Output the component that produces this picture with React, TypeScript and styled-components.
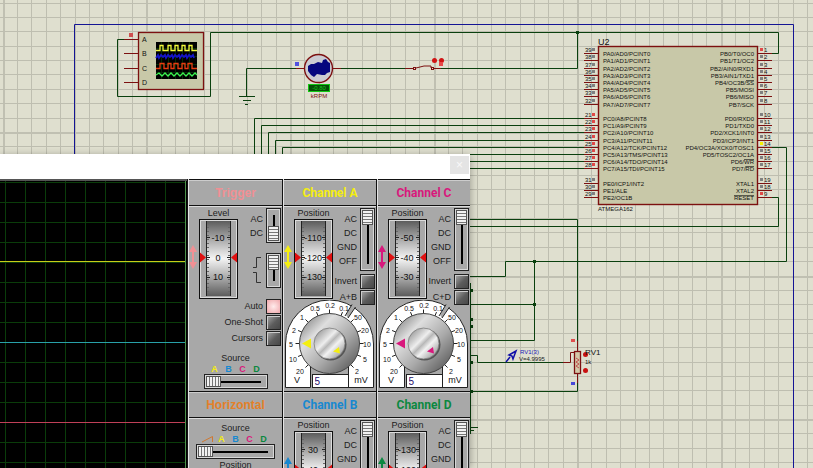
import React from "react";
import styled, { createGlobalStyle } from "styled-components";

const GlobalStyle = createGlobalStyle`
  * { box-sizing: border-box; }
  body { margin: 0; overflow: hidden; font-family: "Liberation Sans", Arial, sans-serif; }
`;

const WIRE = "#0a400e";
const PIN = "#7c1010";

/* ---------- schematic ---------- */

const Desktop = styled.main`
  position: relative;
  min-height: 100vh;
  overflow: hidden;
  background: #dfdfcf;
`;

const Sheet = styled.svg`
  display: block;
  width: 100%;
  height: 100vh;
  font-family: "Liberation Sans", Arial, sans-serif;
`;

const GRID_STEP = 14.36;

function gridOffsets(major: number, limit: number) {
  const out: { at: number; strong: boolean }[] = [];
  const before = Math.floor(major / GRID_STEP);
  for (let i = -before; major + i * GRID_STEP < limit; i++) {
    out.push({ at: Math.round(major + i * GRID_STEP), strong: i % 10 === 0 });
  }
  return out;
}

function Grid() {
  return (
    <g shapeRendering="crispEdges">
      {gridOffsets(433.5, 2600).map((l) => (
        <rect key={"v" + l.at} x={l.at} y={0} width={l.strong ? 2 : 1} height="100%" fill={l.strong ? "#c0c0b2" : "#bebeb0"} />
      ))}
      {gridOffsets(275.5, 1600).map((l) => (
        <rect key={"h" + l.at} x={0} y={l.at} height={l.strong ? 2 : 1} width="100%" fill={l.strong ? "#c0c0b2" : "#bebeb0"} />
      ))}
    </g>
  );
}

type Pin = { y: number; n: string; label: string; over?: string; mark?: string };
const GREY = "#808080";
const RED = "#e04848";

const leftPins: Pin[] = [
  ...[53, 60, 68, 75, 82, 89, 96, 104].map((y, i) => ({ y, n: String(39 - i), label: `PA${i}/AD${i}/PCINT${i}`, mark: GREY })),
  ...["PC0/A8/PCINT8", "PC1/A9/PCINT9", "PC2/A10/PCINT10", "PC3/A11/PCINT11", "PC4/A12/TCK/PCINT12", "PC5/A13/TMS/PCINT13", "PC6/A14/TDO/PCINT14", "PC7/A15/TDI/PCINT15"].map(
    (label, i) => ({ y: [118, 125, 132, 140, 147, 154, 161, 168][i], n: String(21 + i), label, mark: RED })
  ),
  { y: 183, n: "31", label: "PE0/ICP1/INT2", mark: GREY },
  { y: 190, n: "30", label: "PE1/ALE", mark: GREY },
  { y: 197, n: "29", label: "PE2/OC1B", mark: GREY },
];

const rightPins: Pin[] = [
  { y: 53, n: "1", label: "PB0/T0/OC0", mark: RED },
  { y: 60, n: "2", label: "PB1/T1/OC2" },
  { y: 68, n: "3", label: "PB2/AIN0/RXD1" },
  { y: 75, n: "4", label: "PB3/AIN1/TXD1" },
  { y: 82, n: "5", label: "PB4/OC3B/", over: "SS" },
  { y: 89, n: "6", label: "PB5/MOSI" },
  { y: 96, n: "7", label: "PB6/MISO" },
  { y: 104, n: "8", label: "PB7/SCK" },
  { y: 118, n: "10", label: "PD0/RXD0" },
  { y: 125, n: "11", label: "PD1/TXD0" },
  { y: 132, n: "12", label: "PD2/XCK1/INT0" },
  { y: 140, n: "13", label: "PD3/ICP3/INT1" },
  { y: 147, n: "14", label: "PD4/OC3A/XCK0/TOSC1", mark: "#f6f000" },
  { y: 154, n: "15", label: "PD5/TOSC2/OC1A" },
  { y: 161, n: "16", label: "PD6/", over: "WR" },
  { y: 168, n: "17", label: "PD7/", over: "RD" },
  { y: 183, n: "19", label: "XTAL1" },
  { y: 190, n: "18", label: "XTAL2" },
  { y: 197, n: "9", label: "", over: "RESET", mark: RED },
];

function Chip() {
  return (
    <g>
      <rect x={598.5} y={46.5} width={159} height={158} fill="#c8c8a8" stroke={PIN} strokeWidth={1.4} />
      <g fontSize={6} fill="#111">
        {leftPins.map((p) => (
          <g key={p.n}>
            <path d={`M584 ${p.y + 0.5}H598`} stroke={PIN} />
            <text x={585} y={p.y - 1} fontSize={6}>{p.n}</text>
            <rect x={592} y={p.y - 5} width={3} height={3} fill={p.mark} />
            <text x={603} y={p.y + 3}>{p.label}</text>
          </g>
        ))}
        {rightPins.map((p) => (
          <g key={p.n}>
            <path d={`M758 ${p.y + 0.5}H772`} stroke={PIN} />
            <text x={764} y={p.y - 1} fontSize={6}>{p.n}</text>
            <rect x={760} y={p.y - 5} width={3} height={3} fill={p.mark ?? GREY} />
            <text x={754} y={p.y + 3} textAnchor="end">
              {p.label}
              {p.over && <tspan textDecoration="overline">{p.over}</tspan>}
            </text>
          </g>
        ))}
        <text x={598} y={211}>ATMEGA162</text>
        <text x={598} y={45} fontSize={9}>U2</text>
      </g>
    </g>
  );
}

function MiniScope() {
  return (
    <g>
      <rect x={138.5} y={32.5} width={65} height={57} fill="#c8c8a8" stroke={PIN} strokeWidth={1.3} />
      {["A", "B", "C", "D"].map((c, i) => (
        <g key={c}>
          <path d={`M124 ${[39, 53, 68, 82][i] + 0.5}H138`} stroke={PIN} />
          <text x={142} y={[42, 56, 71, 85][i]} fontSize={7} fill="#111">{c}</text>
        </g>
      ))}
      <rect x={156} y={42} width={41} height={37} fill="#000" />
      <path d="M161.5 42V79M168.5 42V79M175.5 42V79M182.5 42V79M189.5 42V79M156 48.5H197M156 56.5H197M156 64.5H197M156 72.5H197" stroke="#062c06" />
      <path d="M156 50.5H160V45.5H163V50.5H168V45.5H171V50.5H175V45.5H178V50.5H182V45.5H185V50.5H189V45.5H192V50.5H197" fill="none" stroke="#f4fa3c" strokeWidth={1.3} />
      <path d="M156 58l2-3 1 3 2-3 2 2 2-2 1 3 2-3 2 2 2-2 1 3 2-3 2 2 2-2 1 3 2-3 2 2 2-2 1 3 2-3 2 2 2-2 1 3" fill="none" stroke="#1414c8" strokeWidth={1.8} />
      <path d="M156 68.5H160V63.5H164V68.5H168V63.5H171V68.5H174V63.5H178V68.5H182V63.5H185V68.5H188V63.5H192V68.5H197" fill="none" stroke="#e83c10" strokeWidth={1.3} />
      <path d="M156 75l3-2 3 3 3-3 3 3 3-3 3 3 3-3 3 3 3-3 3 3 3-3 3 3 3-3 2 2" fill="none" stroke="#3cf450" strokeWidth={1.3} />
      <rect x={129} y={33} width={4} height={4} fill="#d05050" />
    </g>
  );
}

function Motor() {
  return (
    <g>
      <path d="M296 68.5H304M333 68.5H341" stroke={PIN} />
      <circle cx={318.5} cy={68.5} r={14} fill="#cbcbd2" stroke={PIN} strokeWidth={1.4} />
      <path d="M308 66V71L311 75L314 77L317 74L322 75L325 75L327 73L330 72V63L328 62L326 59L323 60L322 63L318 62L314 64L311 64Z" fill="#06067e" />
      <rect x={295} y={62} width={4} height={4} fill="#5252e0" />
      <rect x={308.5} y={84.5} width={21} height={7} fill="#064f06" stroke="#12c812" />
      <text x={319} y={90} fontSize={6} textAnchor="middle" fill="#18c818">-0.80</text>
      <text x={319} y={98} fontSize={6} textAnchor="middle" fill={PIN}>kRPM</text>
    </g>
  );
}

function Potentiometer() {
  return (
    <g>
      <path d="M577.5 341V351M577.5 373V383M563 362.5H570.5V352.5H574" fill="none" stroke={PIN} />
      <rect x={574.5} y={351.5} width={6} height={22} fill="#d4c8a8" stroke={PIN} strokeWidth={1.3} />
      <path d="M576 358l3 2-3 2 3 2-3 2 3 2" fill="none" stroke="#c05050" />
      <rect x={571} y={339} width={4} height={3} fill="#e05050" />
      <rect x={571} y={382} width={4} height={3} fill="#4848d8" />
      <circle cx={585.5} cy={354.5} r={2.5} fill="#c81010" />
      <circle cx={585.5} cy={370.5} r={2.5} fill="#c81010" />
      <text x={585} y={355} fontSize={8} fill="#111">RV1</text>
      <text x={585} y={364} fontSize={6} fill="#111">1k</text>
      <path d="M506 362l4-5M509 355l7-4-3 8-1-3z" fill="none" stroke="#1010a8" strokeWidth={1.5} />
      <text x={520} y={354} fontSize={6} fill="#1818b8">RV1(3)</text>
      <text x={519} y={361} fontSize={6} fill="#222">V=4.9995</text>
    </g>
  );
}

function Schematic() {
  const bus = [118, 125, 132, 140, 147, 154, 161, 168];
  const drop = [254, 261, 268, 275, 282, 289, 296, 303];
  const junctions = [[577, 32], [534, 261], [534, 304], [471, 290], [471, 319], [471, 326], [471, 362], [471, 391]];
  return (
    <Sheet role="img" aria-label="Circuit schematic">
      <Grid />
      <path d="M74.5 2000V24.5H793.5V2000" fill="none" stroke="#141494" />
      <g fill="none" stroke={WIRE}>
        <path d="M124 39.5H117.5V96.5H210.5V32.5H778.5V53.5H772" />
        <path d="M577.5 32.5V68.5H441M405 68.5H341M296 68.5H246.5V96.5M239 96.5H255M243 100.5H251M245 104.5H248" />
        {bus.map((y, i) => (
          <path key={y} d={`M584 ${y + 0.5}H${drop[i] + 0.5}V200`} />
        ))}
        <path d="M772 147.5H786.5V261.5H505.5V276.5H460" />
        <path d="M772 197.5H778.5V226.5H460M460 219.5H577.5V341" />
        <path d="M534.5 261.5V340.5H460M460 304.5H534.5" />
        <path d="M460 355.5H477.5V362.5H563M460 391.5H577.5V383M460 427.5H478M460 430.5H474M470.5 283V434" />
      </g>
      {junctions.map(([x, y]) => (
        <rect key={x + "-" + y} x={x - 1} y={y - 1} width={3} height={3} fill={WIRE} />
      ))}
      <MiniScope />
      <Motor />
      <g fill="none" stroke={PIN}>
        <path d="M405 68.5H413M434 68.5H441M416 68l8-2h7v2" />
        <rect x={413.5} y={67.5} width={2} height={2} />
        <rect x={431.5} y={67.5} width={2} height={2} />
      </g>
      <circle cx={434.5} cy={60.5} r={2.5} fill="#d01414" />
      <circle cx={441.5} cy={60.5} r={2.5} fill="#d01414" />
      <rect x={439} y={62} width={4} height={4} fill="#e84848" />
      <Chip />
      <Potentiometer />
    </Sheet>
  );
}

/* ---------- oscilloscope window ---------- */

const ScopeWindow = styled.section`
  position: absolute;
  left: 0;
  top: 154px;
  bottom: 0;
  width: 470px;
  display: flex;
  flex-direction: column;
  overflow: hidden;
  background: #a8a8a8;
`;

const WindowShadow = styled.div`
  position: absolute;
  left: 0;
  top: 156px;
  bottom: 0;
  width: 470px;
  box-shadow: 0 0 8px rgba(0, 0, 0, 0.35);
`;

const TitleBar = styled.header`
  flex: none;
  display: flex;
  justify-content: flex-end;
  height: 25px;
  padding: 2px 1px;
  background: #fff;
`;

const CloseButton = styled.button`
  width: 19px;
  height: 18px;
  padding: 0;
  border: 0;
  background: #e4e4e4;
  color: #f8f8f8;
  font: 12px/18px "Liberation Sans", sans-serif;
`;

const WindowBody = styled.div`
  flex: 1;
  min-height: 0;
  display: grid;
  grid-template-columns: 1fr 95px 94px 94px;
`;

const Screen = styled.svg`
  display: block;
  width: 100%;
  height: 100%;
  background: #000;
  border-top: 2px solid #555;
`;

const Column = styled.div`
  display: flex;
  flex-direction: column;
  border-left: 1px solid #111;
  box-shadow: inset 1px 0 #e4e4e4;
  padding-left: 1px;
`;

const PanelTitle = styled.h2<{ $color: string; $narrow?: boolean }>`
  flex: none;
  margin: 0;
  height: 27px;
  border: solid #111;
  border-width: 1px 0;
  box-shadow: inset 0 1px #ccc;
  color: ${(p) => p.$color};
  font: bold 12px/27px ${(p) => (p.$narrow ? "Roboto" : '"Liberation Sans"')}, sans-serif;
  text-align: center;
`;

const PanelBody = styled.div`
  flex: none;
  height: 185px;
  padding-top: 1px;
  box-shadow: inset 0 1px #dcdcdc;
  color: #1c1c1c;
  font-size: 9px;
  line-height: 12px;
`;

const Controls = styled.div`
  display: grid;
  grid-template-columns: 10px 39px 1fr;
  height: 98px;
  padding-right: 1px;
`;

const ArrowMark = styled.svg`
  width: 8px;
  height: 24px;
  margin-top: 38px;
  overflow: visible;
`;

const Gauge = styled.div`
  display: flex;
  flex-direction: column;
  align-items: center;
`;

const GaugeFace = styled.svg`
  display: block;
  width: 39px;
  height: 80px;
`;

const SideStack = styled.div`
  display: flex;
  flex-direction: column;
  align-items: flex-end;
  padding-top: 1px;
`;

const SwitchRow = styled.div<{ $gapAfter?: number }>`
  display: flex;
  align-items: flex-start;
  gap: 3px;
  margin-bottom: ${(p) => p.$gapAfter ?? 2}px;
`;

const SwitchLabels = styled.div`
  display: flex;
  flex-direction: column;
  padding-top: 4px;
  line-height: 14px;
  text-align: right;
`;

const SliderBase = styled.input`
  appearance: none;
  display: block;
  margin: 0;
  padding: 1px;
  border: 1px solid #222;
  outline: 1px solid #d8d8d8;
  outline-offset: -2px;
  background: #a8a8a8;
`;

const VSlider = styled(SliderBase)<{ $h: number }>`
  writing-mode: vertical-lr;
  width: 15px;
  height: ${(p) => p.$h}px;
  &::-webkit-slider-runnable-track {
    height: 100%;
    width: 11px;
    background: linear-gradient(#000, #000) 5px 5px / 2px calc(100% - 10px) no-repeat;
  }
  &::-webkit-slider-thumb {
    appearance: none;
    width: 11px;
    height: 15px;
    border: 1px solid #555;
    background: repeating-linear-gradient(#f2f2f2 0 2px, #777 2px 3px);
  }
`;

const HSlider = styled(SliderBase)<{ $w: number }>`
  width: ${(p) => p.$w}px;
  height: 15px;
  &::-webkit-slider-runnable-track {
    height: 11px;
    background: linear-gradient(#000, #000) 5px 5px / calc(100% - 10px) 2px no-repeat;
  }
  &::-webkit-slider-thumb {
    appearance: none;
    width: 15px;
    height: 11px;
    border: 1px solid #555;
    background: repeating-linear-gradient(90deg, #f2f2f2 0 2px, #777 2px 3px);
  }
`;

const ToggleLabel = styled.label`
  display: flex;
  align-items: center;
  justify-content: flex-end;
  gap: 3px;
  height: 16px;
  white-space: nowrap;
`;

const ToggleBox = styled.input`
  appearance: none;
  flex: none;
  width: 15px;
  height: 15px;
  margin: 0;
  border: 1px solid #222;
  background: linear-gradient(135deg, #aaa, #5c5c5c 55%, #484848);
  box-shadow: inset 1px 1px #ccc;
  &:checked {
    background: radial-gradient(#ffecec, #f0a8ac);
    box-shadow: none;
  }
`;

const TriggerToggles = styled.div`
  display: flex;
  flex-direction: column;
  margin-top: -7px;
  padding-right: 1px;
`;

const SourceGroup = styled.div<{ $top: number }>`
  display: flex;
  flex-direction: column;
  align-items: center;
  margin-top: ${(p) => p.$top}px;
`;

const SourceLetters = styled.div`
  display: flex;
  font-weight: bold;
  line-height: 10px;
`;

const Letter = styled.span<{ $color: string }>`
  width: 14px;
  text-align: center;
  color: ${(p) => p.$color};
`;

const RampIcon = styled.svg`
  width: 14px;
  height: 10px;
`;

const KnobArea = styled.div`
  display: grid;
  margin-top: -5px;
`;

const KnobFace = styled.svg`
  grid-area: 1 / 1;
  display: block;
  width: 90px;
  height: 88px;
  margin-left: 1px;
`;

const ValueBox = styled.input`
  grid-area: 1 / 1;
  align-self: end;
  justify-self: center;
  width: 37px;
  height: 14px;
  padding: 0 2px;
  border: 1px solid #222;
  border-radius: 0;
  background: #fff;
  color: #28106c;
  font: 10px/12px "Liberation Sans", sans-serif;
`;

const YELLOW = "#f4ee10";
const BLUE = "#1888d0";
const MAGENTA = "#d8187c";
const GREEN = "#0c8840";

function Arrow({ color }: { color: string }) {
  return (
    <ArrowMark viewBox="0 0 8 24" fill={color}>
      <path d="M4 0L8 7H5V17H8L4 24L0 17H3V7H0Z" />
    </ArrowMark>
  );
}

function Dial({ caption, values, id }: { caption: string; values: string[]; id: string }) {
  return (
    <Gauge>
      <span>{caption}</span>
      <GaugeFace viewBox="0 0 39 80" role="img" aria-label={`${caption} ${values[1]}`}>
        <defs>
          <linearGradient id={id} x1="0" y1="0" x2="0" y2="1">
            <stop offset="0" stopColor="#5c5c5c" />
            <stop offset="0.2" stopColor="#9c9c9c" />
            <stop offset="0.5" stopColor="#f4f4f4" />
            <stop offset="0.8" stopColor="#9c9c9c" />
            <stop offset="1" stopColor="#5c5c5c" />
          </linearGradient>
        </defs>
        <rect x="0.5" y="0.5" width="38" height="79" fill="#a8a8a8" stroke="#111" />
        <rect x="1.5" y="1.5" width="36" height="77" fill="none" stroke="#dcdcdc" />
        <rect x="7" y="2" width="25" height="75" fill={`url(#${id})`} />
        <path d="M7.5 2V77M31.5 2V77" stroke="#222" />
        {Array.from({ length: 18 }, (_, i) => (
          <path key={i} d={`M8 ${i * 4 + 4.5}h2M29 ${i * 4 + 4.5}h2`} stroke="#666" />
        ))}
        <path d="M8 18.5h3M28 18.5h3M8 38.5h3M28 38.5h3M8 58.5h3M28 58.5h3" stroke="#222" />
        <path d="M1 33.5L7 38.5L1 43.5ZM38 33.5L32 38.5L38 43.5Z" fill="#e01010" />
        <g fontSize="9" textAnchor="middle" fill="#111">
          {values.map((v, i) => (
            <text key={v} x="19" y={[21.5, 42, 61][i]}>{v}</text>
          ))}
        </g>
      </GaugeFace>
    </Gauge>
  );
}

const knobScale: [string, number, number][] = [
  ["0.1", 59, 8], ["0.2", 45, 5], ["0.5", 30, 8], ["1", 17, 17], ["2", 9, 30], ["5", 6, 44], ["10", 8, 59], ["20", 15, 71],
  ["50", 73, 17], ["20", 80, 30], ["10", 82, 44], ["5", 80, 59], ["2", 72, 71],
];

function Knob({ color, id }: { color: string; id: string }) {
  return (
    <KnobArea>
      <KnobFace viewBox="0 0 90 88" role="img" aria-label="Volts per division">
        <defs>
          <linearGradient id={id + "o"} x1="0" y1="0" x2="1" y2="1">
            <stop offset="0.1" stopColor="#909090" />
            <stop offset="0.3" stopColor="#dedede" />
            <stop offset="0.6" stopColor="#a8a8a8" />
            <stop offset="0.9" stopColor="#606060" />
          </linearGradient>
          <linearGradient id={id + "i"} x1="0" y1="0" x2="1" y2="1">
            <stop offset="0.1" stopColor="#999" />
            <stop offset="0.4" stopColor="#eee" />
            <stop offset="0.5" stopColor="#b8b8b8" />
            <stop offset="0.62" stopColor="#f2f2f2" />
            <stop offset="0.9" stopColor="#999" />
          </linearGradient>
        </defs>
        <path d="M0.5 87.5V44A44 44 0 0 1 88.5 44V87.5H63.5V64H25.5V87.5Z" fill="#fff" stroke="#222" />
        <path d="M70.5 7L63 18L61 15L67 4.500Z" fill="#a8a8a8" />
        <path d="M70.5 7L63 18M67 4.5L60 16" stroke="#222" />
        {Array.from({ length: 13 }, (_, i) => {
          const a = ((i * 22.5 - 135) * Math.PI) / 180;
          return <line key={i} x1={44.5 + 29 * Math.sin(a)} y1={43.5 - 29 * Math.cos(a)} x2={44.5 + 34 * Math.sin(a)} y2={43.5 - 34 * Math.cos(a)} stroke="#222" />;
        })}
        <g fontSize="7" textAnchor="middle" fill="#111">
          {knobScale.map(([t, x, y], i) => (
            <text key={i} x={x} y={y + 2.5}>{t}</text>
          ))}
        </g>
        <g fontSize="9" textAnchor="middle" fill="#111">
          <text x="12" y="83">V</text>
          <text x="76" y="83">mV</text>
        </g>
        <circle cx="44.5" cy="43.5" r="30" fill={`url(#${id}o)`} stroke="#444" />
        <circle cx="45.5" cy="44.5" r="16" fill="#555" />
        <circle cx="44.5" cy="43.5" r="15.5" fill={`url(#${id}i)`} stroke="#777" strokeWidth="0.7" />
        <path d="M17 43.5L26 38.5V48.5Z" fill={color} />
        <path d="M48 51.5L54 47L55 53.5Z" fill={color} />
      </KnobFace>
      <ValueBox aria-label="Scale value" defaultValue="5" />
    </KnobArea>
  );
}

type ChannelProps = { name: string; color: string; values: string[]; sum: string };

function Channel({ name, color, values, sum }: ChannelProps) {
  return (
    <>
      <PanelTitle $color={color} $narrow>Channel {name}</PanelTitle>
      <PanelBody>
        <Controls>
          <Arrow color={color} />
          <Dial caption="Position" values={values} id={"dial" + name} />
          <SideStack>
            <SwitchRow>
              <SwitchLabels>
                <span>AC</span>
                <span>DC</span>
                <span>GND</span>
                <span>OFF</span>
              </SwitchLabels>
              <VSlider type="range" $h={63} min={0} max={3} defaultValue={0} aria-label={`Channel ${name} coupling`} />
            </SwitchRow>
            <ToggleLabel>Invert<ToggleBox type="checkbox" /></ToggleLabel>
            <ToggleLabel>{sum}<ToggleBox type="checkbox" /></ToggleLabel>
          </SideStack>
        </Controls>
        <Knob color={color} id={"knob" + name} />
      </PanelBody>
    </>
  );
}

function Letters() {
  return (
    <>
      <Letter $color={YELLOW}>A</Letter>
      <Letter $color={BLUE}>B</Letter>
      <Letter $color={MAGENTA}>C</Letter>
      <Letter $color={GREEN}>D</Letter>
    </>
  );
}

function Trigger() {
  return (
    <>
      <PanelTitle $color="#f09094">Trigger</PanelTitle>
      <PanelBody>
        <Controls>
          <Arrow color="#f09094" />
          <Dial caption="Level" values={["-10", "0", "10"]} id="dialTrigger" />
          <SideStack>
            <SwitchRow $gapAfter={10}>
              <SwitchLabels><span>AC</span><span>DC</span></SwitchLabels>
              <VSlider type="range" $h={35} min={0} max={1} defaultValue={1} aria-label="Trigger coupling" />
            </SwitchRow>
            <SwitchRow>
              <svg width="10" height="34" fill="none" stroke="#333">
                <path d="M0 14.5H3.5V4.5H8M0 19.5H3.5V29.5H8" />
              </svg>
              <VSlider type="range" $h={35} min={0} max={1} defaultValue={0} aria-label="Trigger edge" />
            </SwitchRow>
          </SideStack>
        </Controls>
        <TriggerToggles>
          <ToggleLabel>Auto<ToggleBox type="checkbox" defaultChecked /></ToggleLabel>
          <ToggleLabel>One-Shot<ToggleBox type="checkbox" /></ToggleLabel>
          <ToggleLabel>Cursors<ToggleBox type="checkbox" /></ToggleLabel>
        </TriggerToggles>
        <SourceGroup $top={6}>
          <span>Source</span>
          <SourceLetters><Letters /></SourceLetters>
          <HSlider type="range" $w={64} min={0} max={3} defaultValue={0} aria-label="Trigger source" />
        </SourceGroup>
      </PanelBody>
    </>
  );
}

function Horizontal() {
  return (
    <>
      <PanelTitle $color="#e48028">Horizontal</PanelTitle>
      <PanelBody>
        <SourceGroup $top={3}>
          <span>Source</span>
          <SourceLetters>
            <RampIcon viewBox="0 0 14 10" fill="none" stroke="#d07830">
              <path d="M1 8L11.5 2.5V8" />
            </RampIcon>
            <Letters />
          </SourceLetters>
          <HSlider type="range" $w={79} min={0} max={4} defaultValue={0} aria-label="Horizontal source" />
          <span>Position</span>
        </SourceGroup>
      </PanelBody>
    </>
  );
}

function Display() {
  return (
    <Screen role="img" aria-label="Traces">
      <g stroke="#0a3c0a" shapeRendering="crispEdges">
        {Array.from({ length: 10 }, (_, i) => (
          <line key={i} x1={5.5 + i * 20} x2={5.5 + i * 20} y1="0" y2="100%" />
        ))}
        {Array.from({ length: 60 }, (_, i) => (
          <line key={i} y1={1.5 + i * 20} y2={1.5 + i * 20} x1="0" x2="185" />
        ))}
      </g>
      <path d="M185.5 0V2000" stroke="#4a9048" />
      <path d="M0 80.5H185" stroke="#c8cc18" />
      <path d="M0 161.5H185" stroke="#28a0a8" />
      <path d="M0 241.5H185" stroke="#c04058" />
    </Screen>
  );
}

export default function App() {
  return (
    <Desktop>
      <GlobalStyle />
      <Schematic />
      <WindowShadow />
      <ScopeWindow>
        <TitleBar><CloseButton aria-label="Close">×</CloseButton></TitleBar>
        <WindowBody>
          <Display />
          <Column>
            <Trigger />
            <Horizontal />
          </Column>
          <Column>
            <Channel name="A" color={YELLOW} values={["-110", "-120", "-130"]} sum="A+B" />
            <Channel name="B" color={BLUE} values={["30", "40", "50"]} sum="B+C" />
          </Column>
          <Column>
            <Channel name="C" color={MAGENTA} values={["-50", "-40", "-30"]} sum="C+D" />
            <Channel name="D" color={GREEN} values={["-130", "-120", "-110"]} sum="D+A" />
          </Column>
        </WindowBody>
      </ScopeWindow>
    </Desktop>
  );
}
